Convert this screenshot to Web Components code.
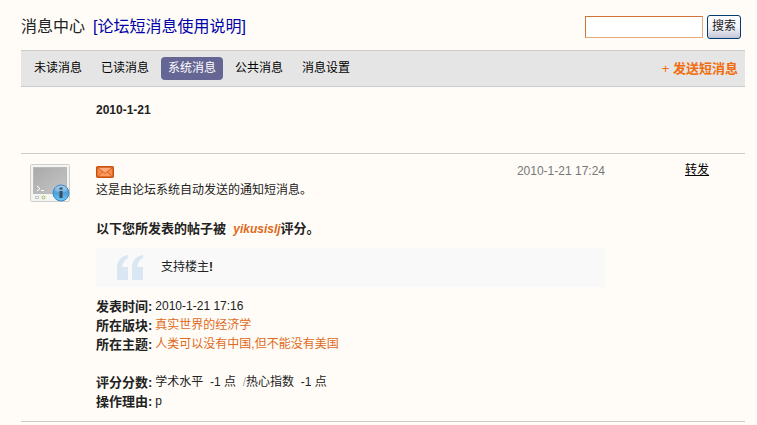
<!DOCTYPE html>
<html lang="zh-CN">
<head>
<meta charset="utf-8">
<meta name="viewport" content="width=device-width, initial-scale=1">
<title>消息中心</title>
<style>
  body {
    margin: 0;
    padding: 0 12px 0 21px;
    background: #fffcf7;
    color: #222;
    font: 12px/19px "Liberation Sans", "Noto Sans CJK SC", sans-serif;
    --line: #ccc;
    --accent: #e06a1b;
  }
  message-nav span { font-weight: normal; }
</style>
</head>
<body>
  <page-header>
    消息中心
    <a slot="help" href="#help">[论坛短消息使用说明]</a>
    <search-box slot="search"></search-box>
  </page-header>

  <message-nav>
    <nav-tab href="#unread">未读消息</nav-tab>
    <nav-tab href="#read">已读消息</nav-tab>
    <nav-tab href="#system" active>系统消息</nav-tab>
    <nav-tab href="#public">公共消息</nav-tab>
    <nav-tab href="#settings">消息设置</nav-tab>
    <a slot="action" href="#compose"><span>+</span> 发送短消息</a>
  </message-nav>

  <main>
    <date-heading>2010-1-21</date-heading>
    <message-item>
      <time slot="time" datetime="2010-01-21T17:24">2010-1-21 17:24</time>
      <a slot="action" href="#forward">转发</a>
      <span slot="summary">这是由论坛系统自动发送的通知短消息。</span>
      <rating-notice user="yikusislj">
        <quote-block slot="quote">支持楼主<b>!</b></quote-block>
        <detail-row label="发表时间">2010-1-21 17:16</detail-row>
        <detail-row label="所在版块"><a href="#forum">真实世界的经济学</a></detail-row>
        <detail-row label="所在主题"><a href="#thread">人类可以没有中国,但不能没有美国</a></detail-row>
        <detail-row label="评分分数" spaced>学术水平&nbsp; -1 点&nbsp; <i>/</i>热心指数&nbsp; -1 点</detail-row>
        <detail-row label="操作理由">p</detail-row>
      </rating-notice>
    </message-item>
  </main>

<script>
(function () {
  //clone a template into an open shadow root
  const attach = (host, html) => {
    const template = document.createElement("template");
    template.innerHTML = html;
    host.attachShadow({ mode: "open" }).appendChild(template.content.cloneNode(true));
  };

  class PageHeader extends HTMLElement {
    constructor() {
      super();
      attach(this, `
        <style>
          :host { display: block; }
          header {
            display: flex;
            align-items: center;
            justify-content: space-between;
            padding: 15px 4px 11px 0;
          }
          h1 {
            display: flex;
            gap: 8px;
            margin: 0;
            font-size: 16px;
            line-height: 24px;
            font-weight: normal;
          }
          ::slotted(a) { color: #0000a8; text-decoration: none; }
        </style>
        <header>
          <h1><span><slot></slot></span><slot name="help"></slot></h1>
          <slot name="search"></slot>
        </header>
      `);
    }
  }

  class SearchBox extends HTMLElement {
    constructor() {
      super();
      attach(this, `
        <style>
          :host { display: block; }
          form { display: flex; align-items: center; gap: 4px; margin: 0; }
          input {
            box-sizing: border-box;
            width: 118px;
            height: 22px;
            padding: 2px 4px;
            border: 1px solid;
            border-color: #d0743a #eaaa80 #eaaa80 #d0743a;
            background: #fff;
            font: inherit;
          }
          button {
            height: 24px;
            padding: 0 4px 2px;
            border: 1px solid #003c74;
            border-radius: 3px;
            background: linear-gradient(#fff, #f4f4fa 50%, #c6c5d7);
            color: #222;
            font: inherit;
          }
        </style>
        <form>
          <input type="text" name="q" aria-label="搜索消息">
          <button type="submit">搜索</button>
        </form>
      `);
    }
  }

  class MessageNav extends HTMLElement {
    constructor() {
      super();
      attach(this, `
        <style>
          :host { display: block; }
          nav {
            display: flex;
            align-items: center;
            justify-content: space-between;
            padding: 6px 7px 6px 6px;
            border: solid var(--line);
            border-width: 1px 0;
            background: #e5e5e5;
          }
          .tabs { display: flex; gap: 5px; }
          ::slotted(a) {
            color: #f26c0c;
            font-size: 13px;
            font-weight: bold;
            text-decoration: none;
          }
        </style>
        <nav>
          <div class="tabs"><slot></slot></div>
          <slot name="action"></slot>
        </nav>
      `);
    }
  }

  class NavTab extends HTMLElement {
    constructor() {
      super();
      attach(this, `
        <style>
          :host { display: block; }
          a {
            display: block;
            padding: 2px 7px;
            border-radius: 4px;
            color: #000;
            text-decoration: none;
          }
          :host([active]) a { background: #666694; color: #fff; }
        </style>
        <a><slot></slot></a>
      `);
    }
    connectedCallback() {
      const link = this.shadowRoot.querySelector("a");
      link.href = this.getAttribute("href");
      if (this.hasAttribute("active")) link.setAttribute("aria-current", "page");
    }
  }

  class DateHeading extends HTMLElement {
    constructor() {
      super();
      attach(this, `
        <style>
          :host { display: block; border-bottom: 1px solid var(--line); }
          h2 { margin: 0; padding: 14px 0 33px 75px; font-size: 12px; line-height: 19px; }
        </style>
        <h2><slot></slot></h2>
      `);
    }
  }

  class TerminalIcon extends HTMLElement {
    constructor() {
      super();
      attach(this, `
        <style>:host, svg { display: block; }</style>
        <svg width="40" height="38" viewBox="0 0 40 38" aria-hidden="true">
          <defs>
            <linearGradient id="screen" x2="1" y2="1">
              <stop stop-color="#a9a9a9"/><stop offset="1" stop-color="#c6c6c6"/>
            </linearGradient>
            <linearGradient id="ball" x2="0" y2="1">
              <stop stop-color="#8fc4ea"/><stop offset=".5" stop-color="#4c9fdc"/><stop offset="1" stop-color="#6cc8f4"/>
            </linearGradient>
          </defs>
          <rect x=".5" y=".5" width="39" height="37" rx="1" fill="#f4f4f3" stroke="#cfcfcd"/>
          <rect x="3.5" y="3.5" width="33" height="26" fill="url(#screen)" stroke="#b9b9b9"/>
          <path d="M7 22l3 2.500-3 2.500M11 26.500h3" fill="none" stroke="#fff"/>
          <rect x="5.500" y="32.500" width="3" height="2" fill="#fff" stroke="#c4c4c4"/>
          <circle cx="13.500" cy="33.500" r="1.500" fill="#eef6da" stroke="#9dbd6b"/>
          <circle cx="31" cy="29" r="8" fill="url(#ball)" stroke="#3f86c2"/>
          <ellipse cx="31" cy="25" rx="6" ry="3.500" fill="#fff" opacity=".2"/>
          <path d="M29.500 23.500h3v2h-3zM29.500 27h3v7h-3z" fill="#3b4a55"/>
        </svg>
      `);
    }
  }

  class MailIcon extends HTMLElement {
    constructor() {
      super();
      attach(this, `
        <style>:host, svg { display: block; }</style>
        <svg width="18" height="12" viewBox="0 0 18 12" aria-hidden="true">
          <rect x=".75" y=".75" width="16.500" height="10.500" rx="1" fill="#fb8a4e" stroke="#c4500f" stroke-width="1.500"/>
          <path d="M2 10l4.500-4h5L16 10z" fill="#ff9c62"/>
          <path d="M2 2h14L9 7.500z" fill="#ffa878"/>
          <path d="M2 2l7 5.500L16 2M2 10.500l4.500-4.500M16 10.500L11.500 6" fill="none" stroke="#d65f20"/>
        </svg>
      `);
    }
  }

  class MessageItem extends HTMLElement {
    constructor() {
      super();
      attach(this, `
        <style>
          :host { display: block; border-bottom: 1px solid var(--line); }
          article {
            display: grid;
            grid-template-columns: 66px minmax(0, 1fr) 60px;
            padding: 8px 0 10px 9px;
          }
          terminal-icon { padding-top: 2px; }
          .body { margin-right: 80px; }
          .head { display: flex; align-items: center; justify-content: space-between; }
          .action { line-height: 16px; }
          ::slotted(time) { color: #777; }
          ::slotted([slot=action]) { color: #000; }
          ::slotted([slot=summary]) { display: block; }
        </style>
        <article>
          <terminal-icon></terminal-icon>
          <div class="body">
            <div class="head"><mail-icon></mail-icon><slot name="time"></slot></div>
            <slot name="summary"></slot>
            <slot></slot>
          </div>
          <div class="action"><slot name="action"></slot></div>
        </article>
      `);
    }
  }

  class RatingNotice extends HTMLElement {
    constructor() {
      super();
      attach(this, `
        <style>
          :host { display: block; }
          h3 { margin: 19px 0 0; font-size: 13px; line-height: 19px; }
          em { color: var(--accent); font-size: 12px; line-height: 1; }
        </style>
        <h3>以下您所发表的帖子被&nbsp; <em></em>评分。</h3>
        <slot name="quote"></slot>
        <div><slot></slot></div>
      `);
    }
    connectedCallback() {
      this.shadowRoot.querySelector("em").textContent = this.getAttribute("user");
    }
  }

  class QuoteBlock extends HTMLElement {
    constructor() {
      super();
      attach(this, `
        <style>
          :host { display: block; margin: 10px 0; }
          blockquote {
            display: flex;
            align-items: center;
            gap: 18px;
            margin: 0;
            padding: 7px 21px;
            background: #f9f9f9;
          }
        </style>
        <blockquote>
          <svg width="26" height="25" viewBox="0 0 26 25" fill="#dae7f2" aria-hidden="true">
            <path d="M11 0v3C8 4 6 7 5 12h6v13H0V13C0 6 4 1 11 0z"/>
            <path d="M26 0v3c-3 1-5 4-6 9h6v13H15V13C15 6 19 1 26 0z"/>
          </svg>
          <span><slot></slot></span>
        </blockquote>
      `);
    }
  }

  class DetailRow extends HTMLElement {
    constructor() {
      super();
      attach(this, `
        <style>
          :host { display: block; }
          :host([spaced]) { margin-top: 19px; }
          div { display: flex; gap: 3px; }
          b { font-size: 13px; flex: none; }
          ::slotted(a) { color: var(--accent); text-decoration: none; }
          ::slotted(i) { color: #aaa; font-style: normal; }
        </style>
        <div><b></b><span><slot></slot></span></div>
      `);
    }
    connectedCallback() {
      this.shadowRoot.querySelector("b").textContent = this.getAttribute("label") + ":";
    }
  }

  customElements.define("page-header", PageHeader);
  customElements.define("search-box", SearchBox);
  customElements.define("message-nav", MessageNav);
  customElements.define("nav-tab", NavTab);
  customElements.define("date-heading", DateHeading);
  customElements.define("terminal-icon", TerminalIcon);
  customElements.define("mail-icon", MailIcon);
  customElements.define("message-item", MessageItem);
  customElements.define("rating-notice", RatingNotice);
  customElements.define("quote-block", QuoteBlock);
  customElements.define("detail-row", DetailRow);
})();
</script>
</body>
</html>
